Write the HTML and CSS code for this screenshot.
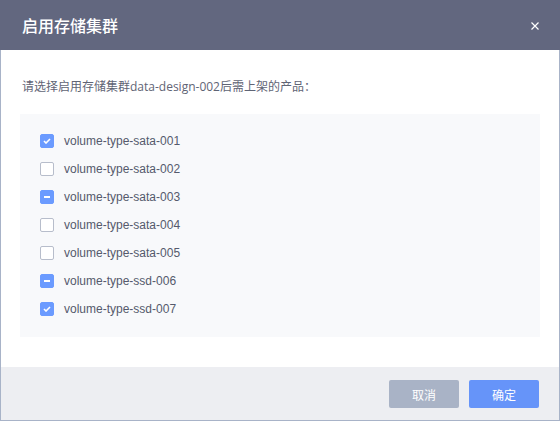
FILE: index.html
```html
<!DOCTYPE html>
<html lang="zh">
<head>
<meta charset="utf-8">
<link rel="stylesheet" href="styles.css">
</head>
<body>
<div class="dialog">
  <div class="dialog-header">
    <span class="dialog-title">启用存储集群</span>
    <span class="dialog-close">
      <svg width="8" height="8" viewBox="0 0 8 8"><path d="M0.5 0.5L7.5 7.5M7.5 0.5L0.5 7.5" stroke="#ffffff" stroke-width="1.2" fill="none"/></svg>
    </span>
  </div>
  <div class="dialog-main">
    <div class="dialog-body">
      <p class="intro">请选择启用存储集群data-design-002后需上架的产品：</p>
      <ul class="list">
        <li class="row"><span class="cb checked"><svg width="8" height="6" viewBox="0 0 8 6"><path d="M1 3L3 5L7 1" stroke="#fff" stroke-width="1.6" fill="none"/></svg></span><span class="label">volume-type-sata-001</span></li>
        <li class="row"><span class="cb"></span><span class="label">volume-type-sata-002</span></li>
        <li class="row"><span class="cb partial"><i class="bar"></i></span><span class="label">volume-type-sata-003</span></li>
        <li class="row"><span class="cb"></span><span class="label">volume-type-sata-004</span></li>
        <li class="row"><span class="cb"></span><span class="label">volume-type-sata-005</span></li>
        <li class="row"><span class="cb partial"><i class="bar"></i></span><span class="label">volume-type-ssd-006</span></li>
        <li class="row"><span class="cb checked"><svg width="8" height="6" viewBox="0 0 8 6"><path d="M1 3L3 5L7 1" stroke="#fff" stroke-width="1.6" fill="none"/></svg></span><span class="label">volume-type-ssd-007</span></li>
      </ul>
    </div>
    <div class="dialog-footer">
      <button class="btn btn-cancel">取消</button>
      <button class="btn btn-ok">确定</button>
    </div>
  </div>
</div>
</body>
</html>
```
FILE: styles.css
```css
* { box-sizing: border-box; }
html, body {
  margin: 0;
  padding: 0;
  background: #ffffff;
  font-family: "Liberation Sans", Arial, "Noto Sans CJK SC", sans-serif;
}
.dialog {
  width: 560px;
  height: 421px;
  display: flex;
  flex-direction: column;
}
.dialog-header {
  height: 50px;
  flex: none;
  background: #62677f;
  display: flex;
  align-items: center;
  justify-content: space-between;
  padding: 0 21px 0 22px;
}
.dialog-title {
  color: #ffffff;
  font-size: 16px;
  font-family: "Noto Sans CJK SC", sans-serif;
  font-weight: 500;
}
.dialog-close {
  display: flex;
  width: 8px;
  height: 8px;
  margin-top: 1px;
}
.dialog-main {
  flex: 1;
  display: flex;
  flex-direction: column;
  border: 1px solid #a8b3c8;
  border-top: none;
}
.dialog-body {
  flex: 1;
  padding: 27px 19px 0 19px;
}
.intro {
  margin: 0 0 17px 2px;
  font-size: 12px;
  line-height: 20px;
  color: #5f6475;
  font-family: "Open Sans", "Noto Sans CJK SC", sans-serif;
}
.list {
  list-style: none;
  margin: 0;
  padding: 13px 20px 14px 20px;
  background: #f8f9fb;
  height: 223px;
}
.row {
  height: 28px;
  display: flex;
  align-items: center;
  gap: 10px;
}
.cb {
  width: 14px;
  height: 14px;
  border: 1px solid #b7bdcb;
  border-radius: 2px;
  background: #ffffff;
  display: flex;
  align-items: center;
  justify-content: center;
  flex: none;
}
.cb.checked, .cb.partial {
  background: #6b9bff;
  border-color: #6b9bff;
}
.bar {
  display: block;
  width: 6px;
  height: 2px;
  background: #ffffff;
}
.label {
  font-size: 12px;
  color: #555a6c;
}
.dialog-footer {
  height: 53px;
  flex: none;
  background: #edeef2;
  display: flex;
  justify-content: flex-end;
  align-items: flex-start;
  gap: 10px;
  padding: 13px 20px 0 0;
}
.btn {
  width: 70px;
  height: 28px;
  border: none;
  border-radius: 2px;
  color: #ffffff;
  font-size: 12px;
  font-family: "Noto Sans CJK SC", sans-serif;
  padding: 0;
}
.btn-cancel { background: #a9b3c6; }
.btn-ok { background: #6694f9; }
```
